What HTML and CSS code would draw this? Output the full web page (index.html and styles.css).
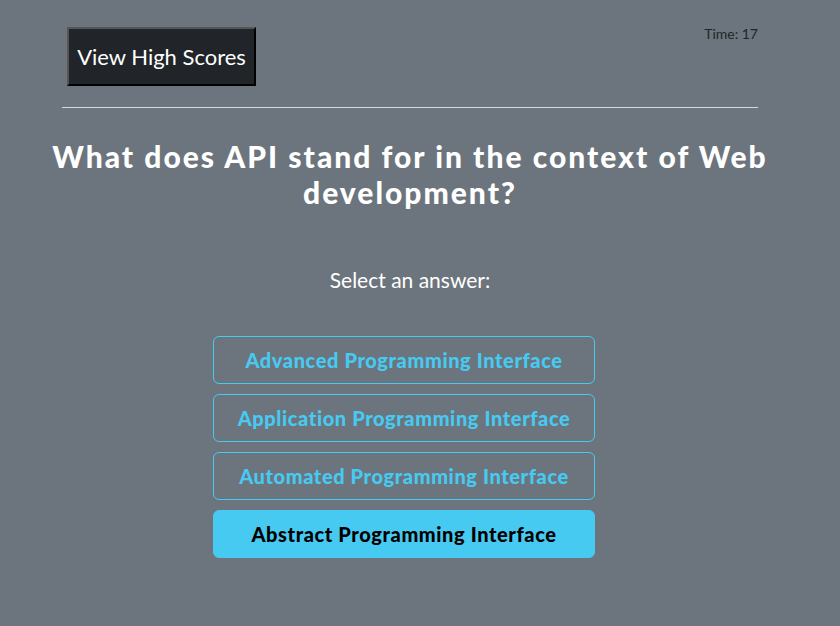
FILE: index.html
```html
<!DOCTYPE html>
<html>
<head>
<meta charset="utf-8">
<link rel="stylesheet" href="styles.css">
</head>
<body>
<div class="page">
  <header class="top">
    <button class="scores-btn">View High Scores</button>
    <div class="timer">Time: 17</div>
  </header>
  <hr class="rule">
  <h1 class="question">What does API stand for in the context of Web development?</h1>
  <p class="prompt">Select an answer:</p>
  <div class="answers">
    <button class="answer">Advanced Programming Interface</button>
    <button class="answer">Application Programming Interface</button>
    <button class="answer">Automated Programming Interface</button>
    <button class="answer answer-active">Abstract Programming Interface</button>
  </div>
</div>
</body>
</html>
```

FILE: styles.css
```css
html, body {
  margin: 0;
  padding: 0;
  background: #6c757d;
  height: 100%;
}
body {
  font-family: Lato, "Open Sans", sans-serif;
  color: #fff;
}
.page {
  width: 696px;
  margin-left: 62px;
}
.top {
  display: flex;
  justify-content: space-between;
  align-items: flex-start;
  padding-top: 27px;
}
.scores-btn {
  margin-left: 5px;
  width: 189px;
  height: 59px;
  background: #212529;
  color: #fff;
  font-family: Lato, sans-serif;
  font-size: 22px;
  border-style: solid;
  border-width: 2px;
  border-color: #555 #000 #000 #555;
  padding: 0;
}
.timer {
  font-size: 14px;
  color: #212529;
  line-height: 14px;
}
.rule {
  margin: 21px 0 0;
  border: 0;
  border-top: 1px solid #d8d8d8;
}
.question {
  margin: 30px -14px 0;
  text-align: center;
  font-family: Lato, sans-serif;
  font-weight: 900;
  font-size: 30px;
  letter-spacing: 2px;
  line-height: 36px;
  color: #fff;
}
.prompt {
  margin: 58px 0 0;
  text-align: center;
  font-size: 21px;
  line-height: 24px;
}
.answers {
  margin: 44px 0 0 151px;
  width: 382px;
  display: flex;
  flex-direction: column;
  gap: 10px;
}
.answer {
  height: 48px;
  background: transparent;
  border: 1px solid #47caf1;
  border-radius: 6px;
  color: #47caf1;
  font-family: Lato, sans-serif;
  font-weight: 900;
  font-size: 20px;
  letter-spacing: 0.6px;
  padding: 0;
}
.answer-active {
  background: #47caf1;
  color: #000;
}
```
